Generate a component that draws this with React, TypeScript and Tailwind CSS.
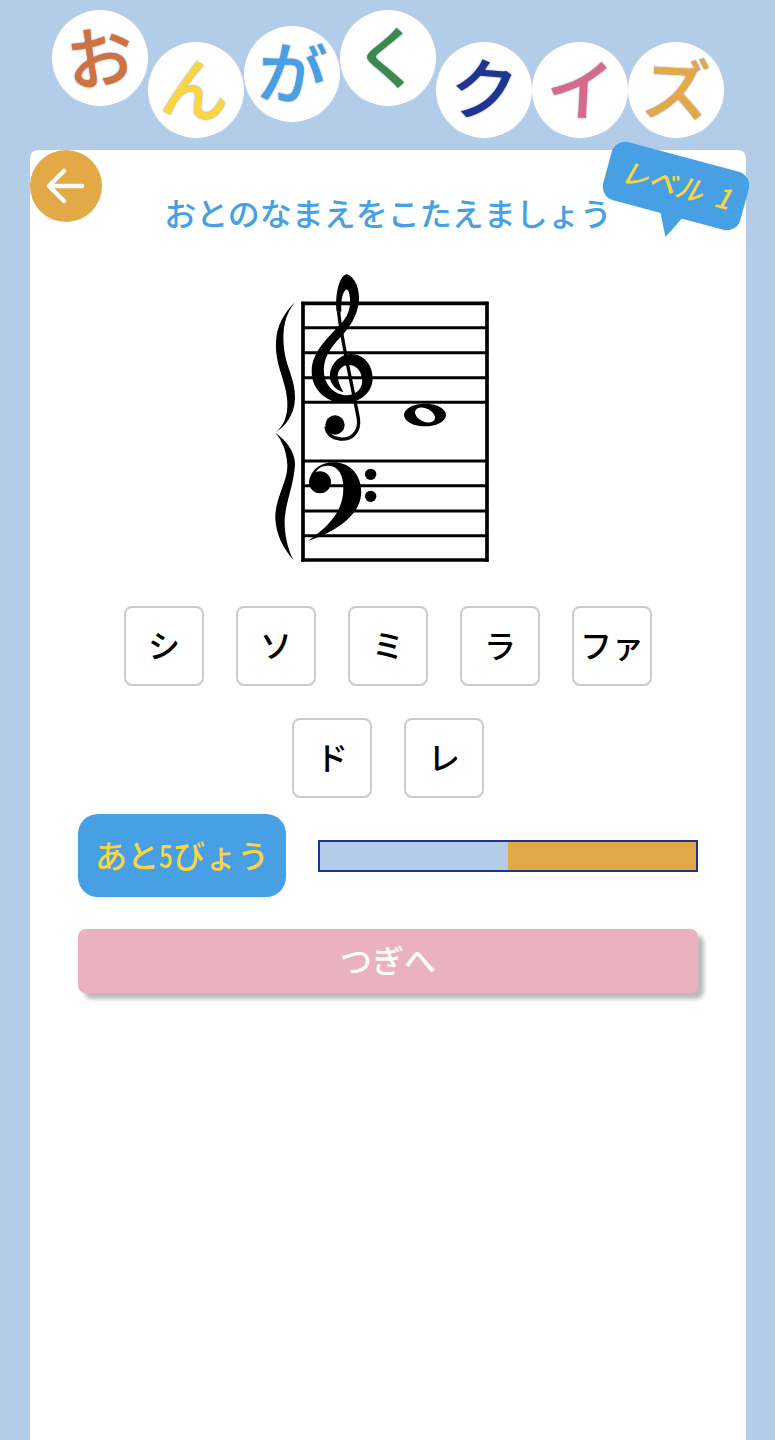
const titleLetters = [
  { char: "お", offset: "mt-[10px]", tilt: "-rotate-[8deg]", color: "text-[#d07240]" },
  { char: "ん", offset: "mt-[42px]", tilt: "rotate-[8deg]", color: "text-[#f9d63f]" },
  { char: "が", offset: "mt-[26px]", tilt: "rotate-[5deg]", color: "text-[#479fe4]" },
  { char: "く", offset: "mt-[10px]", tilt: "rotate-0", color: "text-[#3a8a4e]" },
  { char: "ク", offset: "mt-[42px]", tilt: "rotate-[5deg]", color: "text-[#1e3590]" },
  { char: "イ", offset: "mt-[42px]", tilt: "rotate-[3deg]", color: "text-[#d76a8a]" },
  { char: "ズ", offset: "mt-[42px]", tilt: "rotate-[3deg]", color: "text-[#e3a947]" },
];

const notes = ["シ", "ソ", "ミ", "ラ", "ファ", "ド", "レ"];

const staffLines = [115, 188, 263, 338, 412, 588, 662, 738, 812, 885];

function Staff() {
  return (
    <svg viewBox="0 0 720 915" className="mt-[29px] ml-[182px] block h-[305px] w-[240px]">
      {staffLines.map((y) => (
        <line key={y} x1="125" x2="685" y1={y} y2={y} stroke="black" strokeWidth={y === 115 || y === 885 ? 11 : 9} />
      ))}
      <line x1="129" x2="129" y1="110" y2="890" stroke="black" strokeWidth="11" />
      <line x1="681" x2="681" y1="110" y2="890" stroke="black" strokeWidth="11" />
      {/* brace */}
      <path d="M105 112 C75 150 66 190 72 250 C78 310 106 340 105 400 C104 450 75 485 46 503 C72 482 84 450 82 410 C80 350 44 300 48 230 C50 180 75 140 105 112 Z" />
      <path d="M46 503 C78 525 106 560 105 600 C100 670 72 720 74 780 C76 820 85 855 100 885 C70 850 48 810 46 760 C44 700 84 650 82 600 C80 560 68 528 46 503 Z" />
      {/* treble clef */}
      <path d="M250 382 C222 374 206 350 210 325 C214 295 240 268 272 267 C312 267 338 300 338 340 C338 382 300 414 255 414 C198 414 155 372 155 320 C155 255 212 212 250 168 C266 148 272 125 270 100 C268 82 264 72 258 74 C248 80 242 105 244 140 L230 140 C224 90 238 28 262 28 C287 38 299 75 297 105 C294 152 266 192 240 218 C208 250 188 285 192 325 C196 365 228 392 262 391 C292 389 310 368 306 340 C302 312 284 298 262 300 C243 303 230 320 234 340 C237 360 246 372 250 382 Z" />
      <path d="M236 140 C240 200 270 330 295 460 C302 505 270 525 240 522 C215 520 200 505 198 485" fill="none" stroke="black" strokeWidth="10" />
      <circle cx="225" cy="480" r="29" />
      {/* bass clef */}
      <circle cx="180" cy="652" r="33" />
      <path d="M150 650 C150 610 190 590 225 592 C278 595 308 640 303 690 C298 752 225 802 145 827 C212 780 250 735 250 670 C250 630 235 602 205 602 C180 602 165 615 160 640 Z" />
      <circle cx="332" cy="628" r="17" />
      <circle cx="332" cy="694" r="17" />
      {/* whole note */}
      <ellipse cx="495" cy="450" rx="63" ry="34" />
      <ellipse cx="495" cy="450" rx="32" ry="20" fill="white" transform="rotate(25 495 450)" />
    </svg>
  );
}

export default function App() {
  return (
    <div
      className="flex h-[1440px] flex-col overflow-hidden bg-[#b3cde8] text-black"
      style={{ fontFamily: '"Noto Sans CJK JP", sans-serif' }}
    >
      <header className="flex h-[150px] shrink-0 items-start justify-center pl-px">
        {titleLetters.map((l) => (
          <div
            key={l.char}
            className={`flex h-24 w-24 items-center justify-center rounded-full bg-white ${l.offset}`}
          >
            <span className={`pb-2 text-[68px] leading-none font-medium [text-shadow:0_0_2px_#8a8ac0] ${l.tilt} ${l.color}`}>
              {l.char}
            </span>
          </div>
        ))}
      </header>

      <main className="relative mr-[29px] ml-[30px] flex-1 rounded-t-lg bg-white px-12 pt-[38px]">
        <button
          type="button"
          className="absolute top-0 left-0 flex h-[72px] w-[72px] items-center justify-center rounded-full bg-[#e3a947]"
        >
          <svg viewBox="0 0 72 72" className="h-[72px] w-[72px]" fill="none" stroke="white" strokeWidth="4.5" strokeLinecap="round" strokeLinejoin="round">
            <path d="M19 36 H52 M34 21 L19 36 L34 51" />
          </svg>
        </button>

        <div className="absolute top-[6px] left-[575px] h-[60px] w-[142px] rotate-[15deg] rounded-[14px] bg-[#479fe4] text-center text-[28px] leading-[56px] font-medium text-[#f9d63f] italic whitespace-pre">
          レベル  1
          <div className="absolute top-[58px] left-[62px] h-0 w-0 border-x-[12px] border-t-[24px] border-x-transparent border-t-[#479fe4]" />
        </div>

        <h1 className="h-12 text-center text-[32px] leading-[48px] font-medium text-[#479fe4]">
          おとのなまえをこたえましょう
        </h1>

        <Staff />

        <div className="mt-5 flex flex-wrap justify-center">
          {notes.map((n) => (
            <button
              key={n}
              type="button"
              className="m-4 flex h-20 w-20 items-center justify-center rounded-lg border-2 border-[#ccc] bg-white pb-1 text-[32px] leading-none font-medium whitespace-nowrap"
            >
              {n}
            </button>
          ))}
        </div>

        <div className="flex items-center gap-8">
          <div className="flex h-[83px] w-[208px] items-center justify-center rounded-[20px] bg-[#479fe4] pb-1 text-[32px] font-medium text-[#f9d63f]">
            あと<span className="inline-block w-[14px] origin-left scale-x-75">5</span>びょう
          </div>
          <div className="flex h-8 flex-1 border-2 border-[#1e3590]">
            <div className="h-full w-1/2 bg-[#b3cde8]" />
            <div className="h-full w-1/2 bg-[#e3a947]" />
          </div>
        </div>

        <button
          type="button"
          className="mt-8 flex h-16 w-full items-center justify-center rounded-lg bg-[#eab1c0] pb-1 text-[32px] font-medium text-white shadow-[6px_6px_4px_#bbb]"
        >
          つぎへ
        </button>
      </main>
    </div>
  );
}
